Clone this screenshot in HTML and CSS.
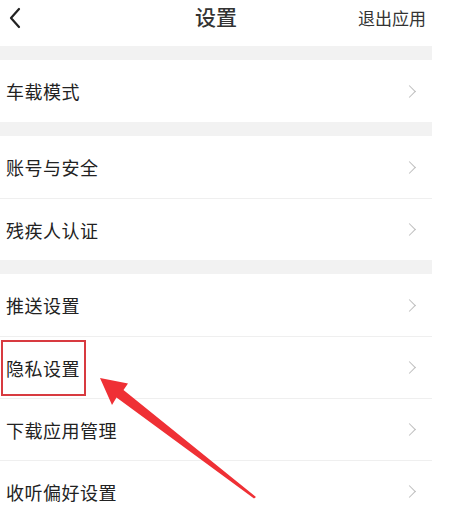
FILE: index.html
```html
<!DOCTYPE html>
<html>
    <head>
        <meta charset="UTF-8">
        <title>设置</title>
        <link rel="stylesheet" href="styles.css">
    </head>

    <body>
        <div class="page">
            <!-- Top bar -->
            <div class="topbar">
                <svg class="back" width="14" height="22" viewBox="0 0 14 22">
                    <polyline points="11,2 3,11 11,20" fill="none" stroke="#222" stroke-width="2.2" stroke-linejoin="round" stroke-linecap="round"/>
                </svg>
                <div class="title">设置</div>
                <div class="quit">退出应用</div>
            </div>

            <div class="gap"></div>
            <div class="row"><span>车载模式</span><i class="chev"></i></div>

            <div class="gap"></div>
            <div class="row"><span>账号与安全</span><i class="chev"></i></div>
            <div class="row line"><span>残疾人认证</span><i class="chev"></i></div>

            <div class="gap"></div>
            <div class="row"><span>推送设置</span><i class="chev"></i></div>
            <div class="row line"><span class="marked">隐私设置</span><i class="chev"></i></div>
            <div class="row line"><span>下载应用管理</span><i class="chev"></i></div>
            <div class="row line"><span>收听偏好设置</span><i class="chev"></i></div>
        </div>

        <!-- Annotation arrow -->
        <svg class="arrow" width="450" height="527" viewBox="0 0 450 527">
            <polygon points="100,378 128,383.5 123.5,390 256,497 254,498.5 116.5,397.5 112,405" fill="#ef3035"/>
        </svg>
    </body>
</html>
```

FILE: styles.css
```css
body {
    margin: 0;
    background-color: #fff;
    font-family: "Noto Sans CJK SC", "Noto Sans", sans-serif;
    color: #222;
}

.page {
    width: 432px;
}

.topbar {
    height: 46px;
    display: flex;
    align-items: center;
    position: relative;
}

.back {
    margin-left: 8px;
    margin-top: -10px;
}

.title {
    position: absolute;
    left: 0;
    right: 0;
    top: 1px;
    text-align: center;
    font-size: 21px;
    font-weight: 500;
    color: #333;
}

.quit {
    margin-left: auto;
    margin-right: 6px;
    margin-top: -11px;
    font-size: 17px;
    color: #333;
}

.gap {
    height: 14px;
    background-color: #f2f2f2;
}

.row {
    height: 62px;
    display: flex;
    align-items: center;
    justify-content: space-between;
    padding-left: 6px;
    padding-right: 16px;
    font-size: 18px;
    letter-spacing: 0.5px;
    box-sizing: border-box;
}

.row.line {
    border-top: 1px solid #efefef;
}

.chev {
    width: 8px;
    height: 8px;
    border-top: 1.5px solid #bdbdbd;
    border-right: 1.5px solid #bdbdbd;
    transform: rotate(45deg);
    margin-right: 2px;
}

.marked {
    outline: 2px solid #d83a40;
    padding: 13px 4px 13px 3px;
    margin-left: -3px;
}

.arrow {
    position: absolute;
    left: 0;
    top: 0;
    pointer-events: none;
}
```
